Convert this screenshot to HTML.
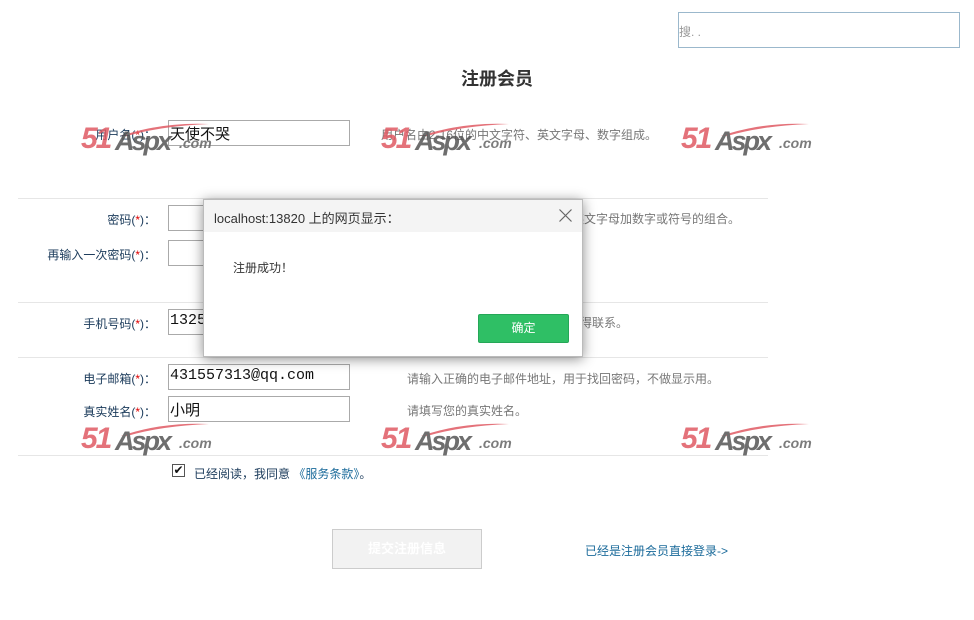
<!DOCTYPE html>
<html><head><meta charset="utf-8"><style>
*{margin:0;padding:0;box-sizing:border-box}
body{width:974px;height:620px;background:#fff;position:relative;overflow:hidden;font-family:"Liberation Sans","Noto Sans CJK SC",sans-serif;font-size:12px;color:#333}
.a{position:absolute;white-space:nowrap}
.lbl{color:#1a3a5a;text-align:right;width:140px;left:16px}
.lbl i{color:#d00;font-style:normal}
.inp{position:absolute;border:1px solid #aaa;background:#fff;height:26px;width:182px;font-family:"Liberation Mono","Noto Sans CJK SC",monospace;font-size:15px;padding:2px 1px;color:#111}
.hint{color:#777}
.line{position:absolute;left:18px;width:750px;height:1px;background:#e6e6e6}
.wm{position:absolute;width:140px;height:36px;opacity:.85}
.wm .n{position:absolute;left:0;top:0;font:italic 900 30px "Liberation Sans",sans-serif;color:#e05a63;letter-spacing:-2px}
.wm .s{position:absolute;left:34px;top:4px;font:italic bold 27px "Liberation Sans",sans-serif;color:#555;letter-spacing:-3px}
.wm .c{position:absolute;left:98px;top:13px;font:italic bold 14px "Liberation Sans",sans-serif;color:#666}
.wm svg{position:absolute;left:20px;top:0}
</style></head><body>
<div class="a" style="left:678px;top:12px;width:282px;height:36px;border:1px solid #9bb8cc;color:#999;padding-top:10px;font-size:12px">搜. .</div>
<div class="a" style="left:461px;top:65px;font-size:18px;font-weight:bold;color:#333">注册会员</div>

<div class="line" style="top:198px"></div>
<div class="line" style="top:302px"></div>
<div class="line" style="top:357px"></div>
<div class="line" style="top:455px"></div>

<div class="a lbl" style="top:126px">用户名(<i>*</i>)：</div>
<div class="inp" style="left:168px;top:120px;width:182px">天使不哭</div>
<div class="a hint" style="left:381px;top:126px">用户名由2-16位的中文字符、英文字母、数字组成。</div>

<div class="a lbl" style="top:211px">密码(<i>*</i>)：</div>
<div class="inp" style="left:168px;top:205px"></div>
<div class="a hint" style="left:500px;top:210px">密码由6-16位英文字母加数字或符号的组合。</div>
<div class="a lbl" style="top:246px">再输入一次密码(<i>*</i>)：</div>
<div class="inp" style="left:168px;top:240px"></div>

<div class="a lbl" style="top:315px">手机号码(<i>*</i>)：</div>
<div class="inp" style="left:168px;top:309px">13256000000</div>
<div class="a hint" style="left:520px;top:314px">便于与您取得联系。</div>

<div class="a lbl" style="top:370px">电子邮箱(<i>*</i>)：</div>
<div class="inp" style="left:168px;top:364px">431557313@qq.com</div>
<div class="a hint" style="left:407px;top:370px">请输入正确的电子邮件地址，用于找回密码，不做显示用。</div>
<div class="a lbl" style="top:403px">真实姓名(<i>*</i>)：</div>
<div class="inp" style="left:168px;top:396px">小明</div>
<div class="a hint" style="left:407px;top:402px">请填写您的真实姓名。</div>

<div class="a" style="left:172px;top:464px;width:13px;height:13px;border:1px solid #555;font-size:12px;line-height:11px;text-align:center;color:#111">✔</div>
<div class="a" style="left:194px;top:465px;color:#1a3a5a">已经阅读，我同意 <span style="color:#1a6a9a">《服务条款》</span>。</div>

<div class="a" style="left:332px;top:529px;width:150px;height:40px;border:1px solid #ccc;background:#f2f2f2;color:#fff;font-weight:bold;text-align:center;line-height:38px;font-size:13px">提交注册信息</div>
<div class="a" style="left:585px;top:542px;color:#1a6a9a">已经是注册会员直接登录-&gt;</div>

<div class="wm" style="left:81px;top:122px"><svg width="110" height="14"><path d="M20 14 Q60 0 108 2 Q60 4 26 14Z" fill="#e05a63"/></svg><span class="n">51</span><span class="s">Aspx</span><span class="c">.com</span></div>
<div class="wm" style="left:381px;top:122px"><svg width="110" height="14"><path d="M20 14 Q60 0 108 2 Q60 4 26 14Z" fill="#e05a63"/></svg><span class="n">51</span><span class="s">Aspx</span><span class="c">.com</span></div>
<div class="wm" style="left:681px;top:122px"><svg width="110" height="14"><path d="M20 14 Q60 0 108 2 Q60 4 26 14Z" fill="#e05a63"/></svg><span class="n">51</span><span class="s">Aspx</span><span class="c">.com</span></div>
<div class="wm" style="left:81px;top:422px"><svg width="110" height="14"><path d="M20 14 Q60 0 108 2 Q60 4 26 14Z" fill="#e05a63"/></svg><span class="n">51</span><span class="s">Aspx</span><span class="c">.com</span></div>
<div class="wm" style="left:381px;top:422px"><svg width="110" height="14"><path d="M20 14 Q60 0 108 2 Q60 4 26 14Z" fill="#e05a63"/></svg><span class="n">51</span><span class="s">Aspx</span><span class="c">.com</span></div>
<div class="wm" style="left:681px;top:422px"><svg width="110" height="14"><path d="M20 14 Q60 0 108 2 Q60 4 26 14Z" fill="#e05a63"/></svg><span class="n">51</span><span class="s">Aspx</span><span class="c">.com</span></div>

<div class="a" style="left:203px;top:199px;width:380px;height:158px;background:#fff;border:1px solid #bbb;box-shadow:0 2px 12px rgba(0,0,0,.45)">
  <div style="height:32px;background:#f4f4f4;padding:8px 0 0 10px;font-size:13px;color:#333">localhost:13820 上的网页显示：</div>
  <svg style="position:absolute;right:10px;top:9px" width="13" height="13"><path d="M0.5 0.5L12.5 12.5M12.5 0.5L0.5 12.5" stroke="#666" stroke-width="1.2"/></svg>
  <div style="position:absolute;left:29px;top:59px;font-size:12px;color:#333">注册成功！</div>
  <div style="position:absolute;left:274px;top:114px;width:91px;height:29px;background:#2fbf65;border:1px solid #25a757;border-radius:2px;color:#fff;text-align:center;line-height:27px;font-size:12px">确定</div>
</div>
</body></html>
